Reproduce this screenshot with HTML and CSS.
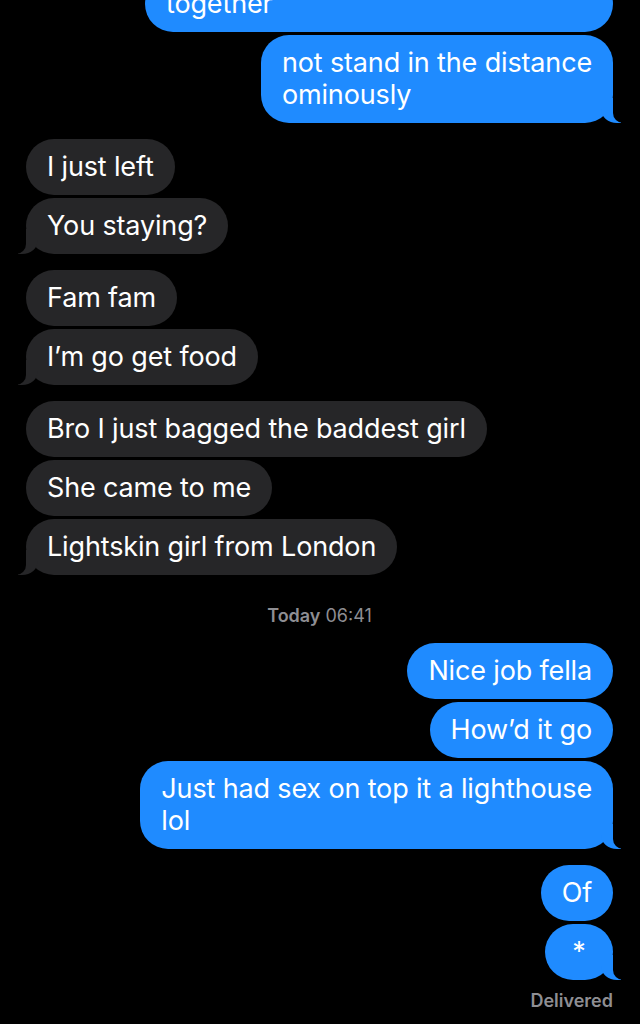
FILE: index.html
```html
<!DOCTYPE html>
<html lang="en">
<head>
  <meta charset="UTF-8" />
  <meta name="viewport" content="width=device-width, initial-scale=1" />
  <title>Messages</title>
  <link rel="stylesheet" href="styles.css">
</head>
<body>

  <div class="thread">
    <!-- earlier messages, scrolled off the top -->
    <div class="group sent">
      <div class="bubble bubble-wide">together</div>
      <div class="bubble tail">not stand in the distance<br>ominously</div>
    </div>

    <div class="group received">
      <div class="bubble">I just left</div>
      <div class="bubble tail">You staying?</div>
    </div>

    <div class="group received">
      <div class="bubble">Fam fam</div>
      <div class="bubble tail">I’m go get food</div>
    </div>

    <div class="group received">
      <div class="bubble">Bro I just bagged the baddest girl</div>
      <div class="bubble">She came to me</div>
      <div class="bubble tail">Lightskin girl from London</div>
    </div>

    <div class="stamp"><b>Today</b> 06:41</div>

    <div class="group sent">
      <div class="bubble">Nice job fella</div>
      <div class="bubble">How’d it go</div>
      <div class="bubble tail">Just had sex on top it a lighthouse<br>lol</div>
    </div>

    <div class="group sent">
      <div class="bubble">Of</div>
      <div class="bubble tail">*</div>
      <div class="status">Delivered</div>
    </div>
  </div>

</body>
</html>
```

FILE: styles.css
```css
/* Reset & basics */
* {
  box-sizing: border-box;
}
body {
  margin: 0;
  padding: 0;
  background: #000;
  color: #fff;
  font-family: Inter, 'Noto Sans', sans-serif;
  overflow: hidden;
}

.thread {
  display: flex;
  flex-direction: column;
  gap: 16px;
  padding: 0 27px 0 26px;
  margin-top: -24px;
}

.group {
  display: flex;
  flex-direction: column;
  gap: 3px;
}

.sent {
  align-items: flex-end;
}

.received {
  align-items: flex-start;
}

/* Bubbles */
.bubble {
  position: relative;
  display: flex;
  justify-content: center;
  min-width: 68px;
  max-width: 500px;
  padding: 12px 21px;
  border-radius: 28px;
  font-size: 27px;
  line-height: 32px;
  letter-spacing: -0.15px;
  white-space: nowrap;
}

.bubble-wide {
  width: 468px;
  justify-content: flex-start;
}

.sent .bubble {
  background: #1f8bff;
}

.received .bubble {
  background: #262628;
}

/* iMessage tail */
.tail::before,
.tail::after {
  content: "";
  position: absolute;
  bottom: 0;
  height: 25px;
}

.sent .tail::before {
  right: -8px;
  width: 20px;
  background: #1f8bff;
  border-bottom-left-radius: 16px 14px;
}

.sent .tail::after {
  right: -26px;
  width: 26px;
  background: #000;
  border-bottom-left-radius: 10px;
}

.received .tail::before {
  left: -8px;
  width: 20px;
  background: #262628;
  border-bottom-right-radius: 16px 14px;
}

.received .tail::after {
  left: -26px;
  width: 26px;
  background: #000;
  border-bottom-right-radius: 10px;
}

/* Meta text */
.stamp {
  margin-top: 14px;
  text-align: center;
  font-size: 18px;
  line-height: 22px;
  color: #8e8e93;
}

.stamp b {
  font-weight: 600;
}

.status {
  margin-top: 8px;
  font-size: 18px;
  line-height: 20px;
  font-weight: 600;
  color: #8e8e93;
}
```
